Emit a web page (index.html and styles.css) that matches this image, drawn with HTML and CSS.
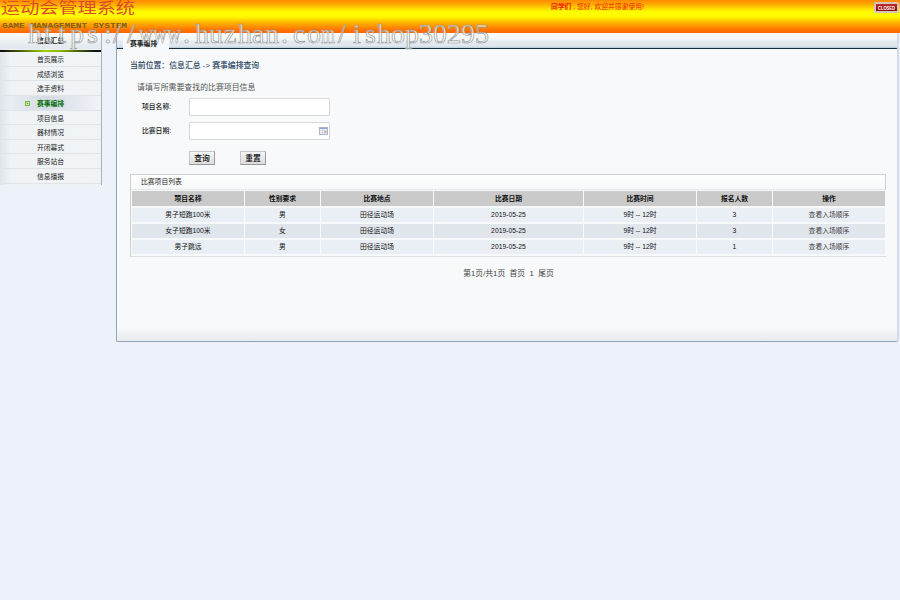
FILE: index.html
```
<!DOCTYPE html>
<html lang="zh">
<head>
    <meta charset="utf-8">
    <title>运动会管理系统</title>
    <link rel="stylesheet" href="styles.css">
</head>
<body>
    <div class="header">
        <svg class="logo" width="140" height="33">
            <text class="logo_cn" x="1" y="13" textLength="134" lengthAdjust="spacingAndGlyphs">运动会管理系统</text>
            <text class="logo_en" x="2" y="28" textLength="125" lengthAdjust="spacingAndGlyphs">GAME MANAGEMENT SYSTEM</text>
        </svg>
        <div class="welcome"><b>同学们</b> , 您好, 欢迎并感谢使用!</div>
        <div class="closed"><svg width="21" height="7"><text x="2" y="5.5" textLength="17" lengthAdjust="spacingAndGlyphs">CLOSED</text></svg></div>
    </div>
    <div class="main">
        <div class="menu">
            <div class="menu_title">信息汇总</div>
            <div class="menu_line"></div>
            <ul>
                <li>首页展示</li>
                <li>成绩浏览</li>
                <li>选手资料</li>
                <li class="active"><svg class="arrow" width="5" height="5"><rect x=".5" y=".5" width="4" height="4" fill="#e4f5d2" stroke="#70bd38"/><path d="M1.8 1.2L3.6 2.5L1.8 3.8Z" fill="#4ea01c"/></svg>赛事编排</li>
                <li>项目信息</li>
                <li>器材情况</li>
                <li>开闭幕式</li>
                <li>服务站台</li>
                <li>信息播报</li>
            </ul>
        </div>
        <div class="content">
            <div class="tabs"><div class="tab">赛事编排</div></div>
            <div class="panel">
                <div class="position">当前位置：信息汇总 -&gt; 赛事编排查询</div>
                <div class="tip">请填写所需要查找的比赛项目信息</div>
                <div class="row"><label>项目名称:</label><div class="input"></div></div>
                <div class="row"><label>比赛日期:</label><div class="input">
                    <svg width="9" height="8"><rect x=".5" y=".5" width="8" height="7" fill="#edf0f8" stroke="#a9b4cc"/><path d="M1 1.5H8" stroke="#8fa8d4"/><path d="M1 3.5H8M1 5.5H8M3.5 2V7M5.5 2V7" stroke="#c6cedf" stroke-width=".6"/><rect x="5.5" y="4" width="2" height="2" fill="#e1a596"/></svg>
                </div></div>
                <div class="buttons"><button>查询</button><button>重置</button></div>
                <div class="list">
                    <div class="list_title">比赛项目列表</div>
                    <table>
                        <colgroup><col class="c1"><col class="c2"><col class="c3"><col class="c4"><col class="c5"><col class="c6"><col class="c7"></colgroup>
                        <tr><th>项目名称</th><th>性别要求</th><th>比赛地点</th><th>比赛日期</th><th>比赛时间</th><th>报名人数</th><th>操作</th></tr>
                        <tr><td>男子短跑100米</td><td>男</td><td>田径运动场</td><td>2019-05-25</td><td>9时 -- 12时</td><td>3</td><td class="link">查看入场顺序</td></tr>
                        <tr class="even"><td>女子短跑100米</td><td>女</td><td>田径运动场</td><td>2019-05-25</td><td>9时 -- 12时</td><td>3</td><td class="link">查看入场顺序</td></tr>
                        <tr><td>男子跳远</td><td>男</td><td>田径运动场</td><td>2019-05-25</td><td>9时 -- 12时</td><td>1</td><td class="link">查看入场顺序</td></tr>
                    </table>
                </div>
                <div class="pages">第1页/共1页&nbsp; 首页&nbsp; 1&nbsp; 尾页</div>
            </div>
        </div>
    </div>
    <svg class="watermark" width="500" height="55">
        <text x="28 44 58 70 87 104 113 127" y="43">https://</text>
        <text x="139" y="43" textLength="42" lengthAdjust="spacingAndGlyphs">www</text>
        <text x="183 195 209 224 238 252 265 281 293 307" y="43">.huzhan.co</text>
        <text x="321" y="43" textLength="14" lengthAdjust="spacingAndGlyphs">m</text>
        <text x="338 353 365 377 391 405 419 433 447 461 475" y="43">/ishop30295</text>
    </svg>
</body>
</html>
```

FILE: styles.css
```
body {
    margin: 0;
    height: 600px;
    overflow: hidden;
    background-color: #edf1fa;
    font-family: "Liberation Sans", "Noto Sans CJK SC", sans-serif;
    font-size: 6.8px;
    color: #222;
}
.header {
    display: flex;
    height: 33px;
    background: linear-gradient(#ff8800 0, #ffa800 4px, #ffff00 12px, #fff800 17px, #ffb000 23px, #ff7200 30px, #ff6600 33px);
}
.logo_cn {
    font-family: "Noto Sans CJK SC", sans-serif;
    font-size: 14.5px;
    fill: #dd4a28;
}
.logo_en {
    font-family: "Liberation Mono", monospace;
    font-size: 8px;
    font-weight: bold;
    fill: #80601c;
}
.welcome {
    margin-left: 411px;
    width: 323px;
    line-height: 14px;
    color: #f01800;
    white-space: nowrap;
}
.closed {
    box-sizing: border-box;
    width: 25px;
    height: 11px;
    margin-top: 2px;
    border: 2px solid #d5c4be;
    border-radius: 2px;
    background: linear-gradient(#c22b2b, #8b0808);
}
.closed svg {
    display: block;
}
.closed text {
    font-size: 4.5px;
    font-weight: bold;
    fill: #fff;
}
.main {
    display: flex;
    align-items: flex-start;
}
.menu {
    box-sizing: border-box;
    width: 102px;
    height: 152px;
    border-right: 1px solid #a9b2bc;
    background: linear-gradient(90deg, #dfe4e9, #eff3f6 10px, #f1f4f7);
    text-align: center;
}
.menu_title {
    height: 16px;
    line-height: 16px;
    font-weight: bold;
    background: linear-gradient(#fafbfc, #e1e7ec);
}
.menu_line {
    height: 3px;
    background: linear-gradient(90deg, #111 3px, #a0d000 45px, #89b900 60px, #111 95px);
    background-size: 100% 2px;
    background-position: 0 1px;
    background-repeat: no-repeat;
}
.menu ul {
    list-style: none;
    margin: 0;
    padding: 0;
}
.menu li {
    position: relative;
    box-sizing: border-box;
    height: 14.65px;
    line-height: 15px;
    border-bottom: 1px solid #e0e4e8;
}
.menu li.active {
    color: #087008;
    font-weight: bold;
    background: linear-gradient(90deg, transparent, #d6dae4 45%, transparent);
}
.arrow {
    position: absolute;
    left: 25px;
    top: 5px;
}
.content {
    box-sizing: border-box;
    width: 783px;
    height: 309px;
    margin-left: 14px;
    border-left: 1px solid #91a4b4;
    border-right: 2px solid #d5dce8;
    border-bottom: 1px solid #91a4b4;
    border-radius: 0 0 3px 2px;
    background: linear-gradient(#f7f9fb 295px, #e6ebee);
}
.tabs {
    box-sizing: border-box;
    height: 16px;
    padding: 2px 0 0 6px;
    border-bottom: 1px solid #142e40;
    background: linear-gradient(#fbfcfc 0, #f2f5f6 7px, #e3eaee 8px, #e1e8ed 13px, #b4cbd8 15px);
}
.tab {
    box-sizing: border-box;
    width: 46px;
    height: 14px;
    line-height: 18px;
    padding-left: 7px;
    font-weight: bold;
    background-color: #f7f9fb;
    white-space: nowrap;
}
.panel {
    padding: 10px 10px 0 13px;
}
.position {
    height: 12px;
    line-height: 13px;
    font-size: 7.85px;
    font-weight: 500;
    color: #28435e;
}
.tip {
    height: 12px;
    line-height: 12px;
    margin: 11px 0 4px 7px;
    font-size: 7.9px;
    color: #555;
}
.row {
    display: flex;
    height: 18px;
    line-height: 18px;
    margin-bottom: 6px;
}
.row label {
    width: 47px;
    padding-left: 12px;
    font-weight: 500;
}
.input {
    display: flex;
    align-items: center;
    justify-content: flex-end;
    box-sizing: border-box;
    width: 141px;
    padding-right: 1px;
    border: 1px solid #d6d8da;
    border-radius: 1px;
    background-color: #fff;
}
.buttons {
    display: flex;
    gap: 25px;
    margin: 11px 0 9px 59px;
}
button {
    width: 26px;
    height: 14px;
    padding: 0;
    border: 1px solid;
    border-color: #c5c5c5 #999 #999 #c5c5c5;
    background: linear-gradient(#f6f6f6, #dcdcdc);
    font: 500 7.8px/12px "Noto Sans CJK SC", sans-serif;
    color: #000;
}
.list {
    box-sizing: border-box;
    width: 756px;
    height: 83px;
    border: 1px solid #ccced0;
    border-bottom-color: #dddfe1;
}
.list_title {
    height: 14px;
    line-height: 14px;
    padding-left: 10px;
    border-bottom: 1px solid #e7e8e9;
    background: linear-gradient(#fff, #f7f8fa);
}
table {
    width: 754px;
    table-layout: fixed;
    border-collapse: collapse;
    text-align: center;
}
.c1 { width: 113px; }
.c2 { width: 76px; }
.c3 { width: 113px; }
.c4 { width: 150px; }
.c5 { width: 113px; }
.c6 { width: 76px; }
.c7 { width: 113px; }
th, td {
    height: 14px;
    line-height: 14px;
    padding: 0;
    border: 1px solid #f7f9fb;
    border-bottom-width: 2px;
    background-color: #eaeff5;
    background-clip: padding-box;
    color: #111;
}
th {
    height: 15px;
    background-color: #cacaca;
}
.even td {
    background-color: #e1e6ed;
}
td.link {
    color: #444;
}
.pages {
    margin-top: 11px;
    line-height: 12px;
    font-size: 7.8px;
    color: #444;
    text-align: center;
}
.watermark {
    position: absolute;
    left: 0;
    top: 0;
}
.watermark text {
    font-family: "Liberation Serif", serif;
    font-size: 28px;
    fill: #fff;
    fill-opacity: .65;
    stroke: #999;
    stroke-width: .7px;
}
```
